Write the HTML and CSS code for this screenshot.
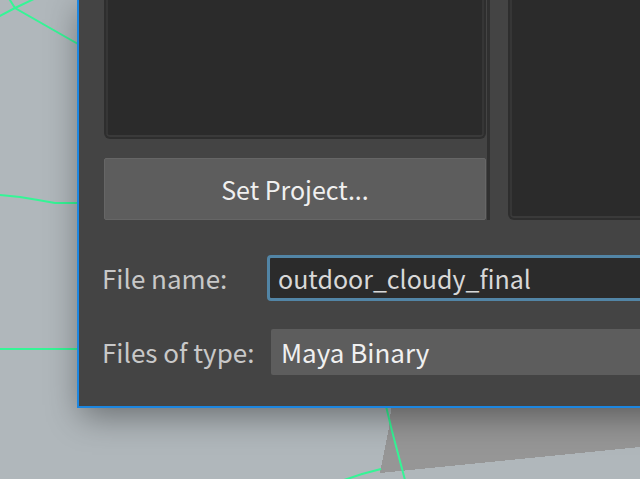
FILE: index.html
```html
<!DOCTYPE html>
<html lang="en">
<head>
    <meta charset="UTF-8">
    <meta name="viewport" content="width=device-width, initial-scale=1.0">
    <title>Save As</title>
    <link rel="stylesheet" href="styles.css">
</head>
<body>
    <div class="viewport">
        <svg class="scene" viewBox="0 0 640 479" preserveAspectRatio="xMinYMin slice" aria-hidden="true">
            <polygon class="ground" points="392,400 640,400 640,447 400,471 380,473 389,428"/>
            <g class="wires">
                <polyline points="8,-3 15,8 78,44"/>
                <polyline points="-2,17 15,8 36,-2"/>
                <polyline points="0,195 20,197 38,200 55,203 80,203"/>
                <polyline points="0,349 80,349"/>
                <polyline points="386,406 392,431 405,480"/>
                <polyline points="344,480 362,474 381,469"/>
            </g>
        </svg>
        <form class="dialog">
            <div class="panes">
                <div class="sidebar">
                    <div class="list"></div>
                    <button type="button" class="set-project">Set Project...</button>
                </div>
                <div class="list"></div>
            </div>
            <div class="fields">
                <label for="fileName">File name:</label>
                <input type="text" id="fileName" class="file-name" value="outdoor_cloudy_final" spellcheck="false">
                <label for="fileType">Files of type:</label>
                <select id="fileType" class="file-type">
                    <option>Maya Binary</option>
                </select>
            </div>
        </form>
    </div>
</body>
</html>
```
FILE: styles.css
```css
:root {
    --panel: #444444;
    --well: #2b2b2b;
    --control: #5d5d5d;
    --edge: #1c86e0;
    --focus: #5285a6;
    --wire: #35f596;
}

* {
    margin: 0;
    padding: 0;
    box-sizing: border-box;
}

body {
    font-family: "Noto Sans CJK SC", "Noto Sans", sans-serif;
    font-size: 26px;
    line-height: 36px;
    color: #c8c8c8;
    background-color: #b0b7bb;
}

.viewport {
    position: relative;
    min-height: 100vh;
    padding-left: 77px;
    overflow: hidden;
}

.scene {
    position: absolute;
    top: 0;
    left: 0;
    width: 100%;
    height: 100%;
}

.ground {
    fill: #969696;
    shape-rendering: crispEdges;
}

.wires {
    fill: none;
    stroke: var(--wire);
    stroke-width: 2;
}

/* the dialog runs off the top and right of the window */
.dialog {
    position: relative;
    margin-right: -40px;
    padding: 0 0 31px 25px;
    background-color: var(--panel);
    border-left: 2px solid var(--edge);
    border-bottom: 2px solid var(--edge);
    box-shadow: 4px 8px 32px rgba(0, 0, 0, 0.4);
}

.panes {
    display: grid;
    grid-template-columns: 386px 1fr;
    gap: 18px;
}

.sidebar {
    display: flex;
    flex-direction: column;
    gap: 19px;
    padding-right: 1px;
    border-right: 3px solid #303030;
}

.list {
    min-height: 139px;
    background-color: var(--well);
    border: 2px solid #2e2e2e;
    border-top: none;
    border-radius: 0 0 6px 6px;
    box-shadow: inset 0 -2px #3a3a3a, inset 2px 0 #363636, inset -2px 0 #363636;
}

.set-project {
    height: 62px;
    font: inherit;
    font-size: 25px;
    color: #f0f0f0;
    background-color: var(--control);
    border: 1px solid #666666;
    border-radius: 2px;
}

.fields {
    display: grid;
    grid-template-columns: 165px 1fr;
    row-gap: 28px;
    align-items: center;
    margin: 35px 0 0 -2px;
}

.file-name,
.file-type {
    width: 100%;
    height: 46px;
    font: inherit;
    border-radius: 4px;
    outline: none;
}

.file-name {
    padding: 0 8px;
    font-size: 25px;
    color: #d8d8d8;
    background-color: var(--well);
    border: 3px solid var(--focus);
}

.file-type {
    appearance: none;
    margin-left: 4px;
    padding: 0 10px;
    color: #f0f0f0;
    background-color: var(--control);
    border: none;
    border-radius: 2px;
}
```
